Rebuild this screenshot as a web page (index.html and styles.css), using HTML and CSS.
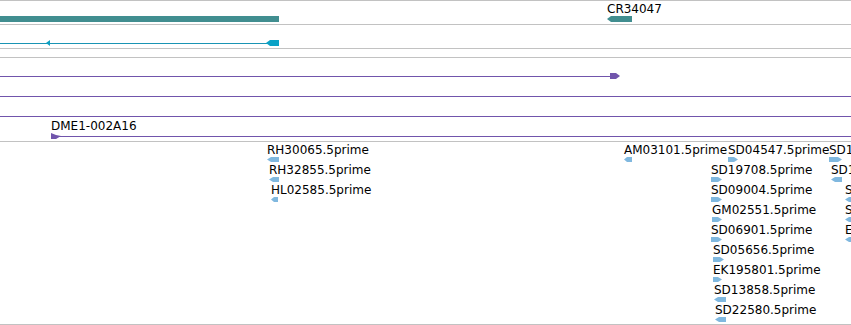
FILE: index.html
```html
<!DOCTYPE html>
<html lang="en">
  <head>
    <meta charset="UTF-8" />
    <title>Tracks</title>
    <link rel="stylesheet" href="styles.css">
  </head>
  <body>
    <div class="browser">
      <!-- gene track -->
      <div class="track track-gene">
        <div class="bar teal" style="left: 0; top: 15px; width: 279px"></div>
        <div class="feature" style="left: 607px; top: 1px">
          <div class="label">CR34047</div>
          <svg class="glyph" width="25" height="6"><polygon points="0,3 4,0 25,0 25,6 4,6" fill="#418e90" /></svg>
        </div>
      </div>

      <!-- transcript track -->
      <div class="track track-mrna">
        <div class="line blue" style="left: 0; top: 18px; width: 270px"></div>
        <svg class="mark" style="left: 46px; top: 15px" width="5" height="6"><polygon points="0,3 4,0 4,6" fill="#0d9fc2" /></svg>
        <svg class="mark" style="left: 266px; top: 15px" width="13" height="6"><polygon points="0,3 4,0 13,0 13,6 4,6" fill="#0aa2c6" /></svg>
      </div>

      <div class="spacer"></div>

      <!-- clone track -->
      <div class="track track-clone">
        <div class="line purple" style="left: 0; top: 18px; width: 612px"></div>
        <svg class="mark" style="left: 610px; top: 15px" width="10" height="6"><polygon points="0,0 6,0 10,3 6,6 0,6" fill="#7155ac" /></svg>
        <div class="line purple" style="left: 0; top: 38px; right: 0"></div>
        <div class="line purple" style="left: 0; top: 58px; right: 0"></div>
        <div class="feature" style="left: 51px; top: 61px">
          <div class="label">DME1-002A16</div>
        </div>
        <div class="line purple" style="left: 58px; top: 78px; right: 0"></div>
        <svg class="mark" style="left: 51px; top: 75px" width="10" height="6"><polygon points="0,0 5,2 10,3 5,6 0,6" fill="#7155ac" /></svg>
      </div>

      <!-- EST track -->
      <div class="track track-est">
        <div class="feature" style="left: 267px; top: 1px">
          <div class="label">RH30065.5prime</div>
          <svg class="glyph" width="12" height="5"><polygon points="0,2.5 4,0 12,0 12,5 4,5" /></svg>
        </div>
        <div class="feature" style="left: 269px; top: 21px">
          <div class="label">RH32855.5prime</div>
          <svg class="glyph" width="10" height="5"><polygon points="0,2.5 4,0 10,0 10,5 4,5" /></svg>
        </div>
        <div class="feature" style="left: 271px; top: 41px">
          <div class="label">HL02585.5prime</div>
          <svg class="glyph" width="7" height="5"><polygon points="0,2.5 3,0 7,0 7,5 3,5" /></svg>
        </div>

        <div class="feature" style="left: 624px; top: 1px">
          <div class="label">AM03101.5prime</div>
          <svg class="glyph" width="8" height="5"><polygon points="0,2.5 3,0 8,0 8,5 3,5" /></svg>
        </div>
        <div class="feature" style="left: 728px; top: 1px">
          <div class="label">SD04547.5prime</div>
          <svg class="glyph" width="10" height="5"><polygon points="0,0 6,0 10,2.5 6,5 0,5" /></svg>
        </div>
        <div class="feature" style="left: 711px; top: 21px">
          <div class="label">SD19708.5prime</div>
          <svg class="glyph" width="11" height="5"><polygon points="0,0 7,0 11,2.5 7,5 0,5" /></svg>
        </div>
        <div class="feature" style="left: 711px; top: 41px">
          <div class="label">SD09004.5prime</div>
          <svg class="glyph" width="11" height="5"><polygon points="0,0 7,0 11,2.5 7,5 0,5" /></svg>
        </div>
        <div class="feature" style="left: 712px; top: 61px">
          <div class="label">GM02551.5prime</div>
          <svg class="glyph" width="10" height="5"><polygon points="0,0 6,0 10,2.5 6,5 0,5" /></svg>
        </div>
        <div class="feature" style="left: 711px; top: 81px">
          <div class="label">SD06901.5prime</div>
          <svg class="glyph" width="11" height="5"><polygon points="0,0 7,0 11,2.5 7,5 0,5" /></svg>
        </div>
        <div class="feature" style="left: 713px; top: 101px">
          <div class="label">SD05656.5prime</div>
          <svg class="glyph" width="11" height="5"><polygon points="0,0 7,0 11,2.5 7,5 0,5" /></svg>
        </div>
        <div class="feature" style="left: 713px; top: 121px">
          <div class="label">EK195801.5prime</div>
          <svg class="glyph" width="9" height="5"><polygon points="0,0 5,0 9,2.5 5,5 0,5" /></svg>
        </div>
        <div class="feature" style="left: 714px; top: 141px">
          <div class="label">SD13858.5prime</div>
          <svg class="glyph" width="12" height="5"><polygon points="0,2.5 4,0 12,0 12,5 4,5" /></svg>
        </div>
        <div class="feature" style="left: 715px; top: 161px">
          <div class="label">SD22580.5prime</div>
          <svg class="glyph" width="11" height="5"><polygon points="0,2.5 4,0 11,0 11,5 4,5" /></svg>
        </div>

        <div class="feature" style="left: 829px; top: 1px">
          <div class="label">SD10422.5prime</div>
          <svg class="glyph" width="13" height="5"><polygon points="0,0 9,0 13,2.5 9,5 0,5" /></svg>
        </div>
        <div class="feature" style="left: 831px; top: 21px">
          <div class="label">SD12271.5prime</div>
          <svg class="glyph" width="11" height="5"><polygon points="0,2.5 4,0 11,0 11,5 4,5" /></svg>
        </div>
        <div class="feature" style="left: 845px; top: 41px">
          <div class="label">SD07719.5prime</div>
          <svg class="glyph" width="11" height="5"><polygon points="0,2.5 4,0 11,0 11,5 4,5" /></svg>
        </div>
        <div class="feature" style="left: 845px; top: 61px">
          <div class="label">SD02113.5prime</div>
          <svg class="glyph" width="11" height="5"><polygon points="0,2.5 4,0 11,0 11,5 4,5" /></svg>
        </div>
        <div class="feature" style="left: 845px; top: 81px">
          <div class="label">EC288041.5prime</div>
          <svg class="glyph" width="11" height="5"><polygon points="0,2.5 4,0 11,0 11,5 4,5" /></svg>
        </div>
      </div>
    </div>
  </body>
</html>
```

FILE: styles.css
```css
* {
  box-sizing: border-box;
  margin: 0;
  padding: 0;
}

body {
  background-color: #ffffff;
  font-family: "DejaVu Sans", sans-serif;
  font-size: 12px;
  color: #000000;
  overflow: hidden;
}

.browser {
  width: 851px;
  height: 325px;
  border-top: 1px solid #c2c2c2;
  overflow: hidden;
}

.track {
  position: relative;
  overflow: hidden;
  border-bottom: 1px solid #c2c2c2;
}

.track-gene {
  height: 24px;
}

.track-mrna {
  height: 24px;
}

.spacer {
  height: 9px;
  border-bottom: 1px solid #c2c2c2;
}

.track-clone {
  height: 84px;
}

.track-est {
  height: 183px;
}

.bar,
.line,
.mark,
.feature {
  position: absolute;
}

.bar {
  height: 6px;
}

.teal {
  background-color: #418e90;
}

.line {
  height: 1px;
}

.blue {
  background-color: #1a94b4;
}

.purple {
  background-color: #7155ac;
}

.feature {
  display: flex;
  flex-direction: column;
  align-items: flex-start;
  white-space: nowrap;
}

.label {
  line-height: 14px;
}

.glyph {
  display: block;
  fill: #80b8df;
}

.mark {
  display: block;
}
```
